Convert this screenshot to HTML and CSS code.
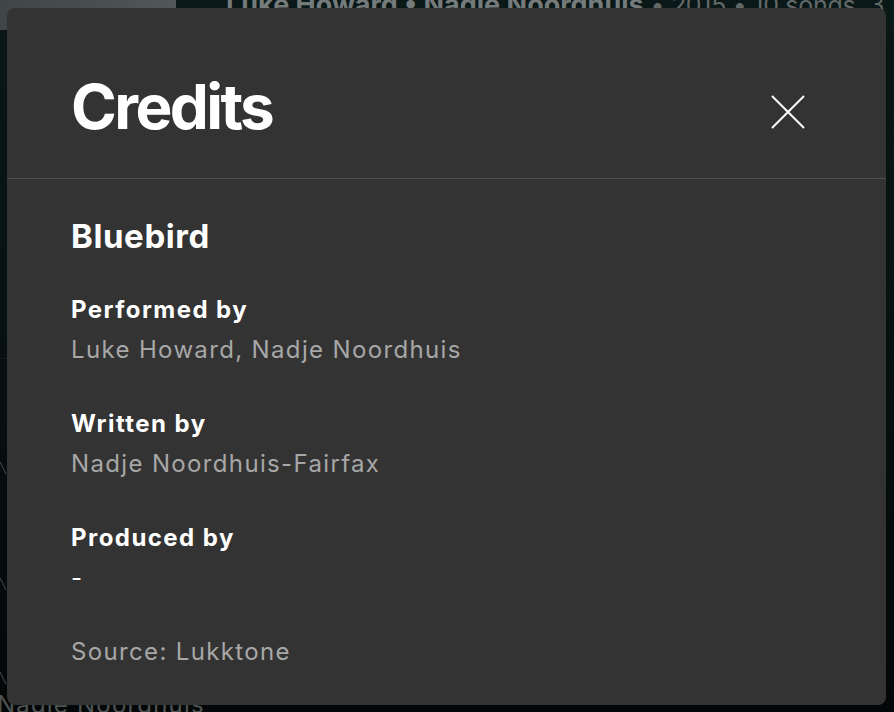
FILE: index.html
```html
<!DOCTYPE html>
<html lang="en">
<head>
<meta charset="utf-8">
<title>Credits</title>
<link rel="stylesheet" href="styles.css">
</head>
<body>
<div class="page">
  <div class="bg-top">
    <div class="art"></div>
    <div class="meta"><span class="meta-strong">Luke Howard • Nadje Noordhuis</span><span class="meta-light"> • 2015 • 10 songs, 3</span></div>
  </div>
  <div class="bg-body">
    <div class="bg-left">
      <div class="rule"></div>
      <svg class="slash s1" width="8" height="14" viewBox="0 0 8 14"><path d="M0 1 L6 13" stroke="#3a3f40" stroke-width="1.2" fill="none"/></svg>
      <svg class="slash s2" width="8" height="14" viewBox="0 0 8 14"><path d="M0 1 L6 13" stroke="#3a3f40" stroke-width="1.2" fill="none"/></svg>
      <svg class="slash s3" width="8" height="14" viewBox="0 0 8 14"><path d="M0 1 L6 13" stroke="#3a3f40" stroke-width="1.2" fill="none"/></svg>
    </div>
    <div class="bg-bottom-text">Nadje Noordhuis</div>
  </div>

  <div class="modal" role="dialog" aria-label="Credits">
    <div class="modal-header">
      <h1 class="modal-title">Credits</h1>
      <button class="close" aria-label="Close">
        <svg width="34" height="34" viewBox="0 0 34 34"><path d="M1 1 L33 33 M33 1 L1 33" stroke="#ffffff" stroke-width="2" fill="none"/></svg>
      </button>
    </div>
    <div class="modal-body">
      <h2 class="track">Bluebird</h2>
      <div class="group">
        <div class="label">Performed by</div>
        <div class="value">Luke Howard, Nadje Noordhuis</div>
      </div>
      <div class="group">
        <div class="label">Written by</div>
        <div class="value">Nadje Noordhuis-Fairfax</div>
      </div>
      <div class="group">
        <div class="label">Produced by</div>
        <div class="value dash">-</div>
      </div>
      <div class="source">Source: Lukktone</div>
    </div>
  </div>
</div>
</body>
</html>
```

FILE: styles.css
```css
html, body {
  margin: 0;
  padding: 0;
  height: 100%;
}

body {
  background: #050909;
  font-family: Inter, "Noto Sans", sans-serif;
  overflow: hidden;
}

.page {
  position: relative;
  width: 894px;
  height: 712px;
  background: linear-gradient(180deg, #0a1616 0%, #081212 40%, #040707 100%);
  overflow: hidden;
}

.bg-top {
  display: flex;
  align-items: flex-start;
  height: 30px;
  background: #0a1818;
}

.art {
  width: 176px;
  height: 30px;
  background: linear-gradient(100deg, #3f4646 0%, #4a5050 60%, #535958 100%);
  flex: none;
}

.meta {
  margin-left: 50px;
  margin-top: -11px;
  font-size: 27px;
  line-height: 32px;
  color: #626868;
  white-space: nowrap;
}

.meta-strong {
  font-weight: 700;
  color: #757b7b;
}

.meta-light {
  font-size: 25px;
  letter-spacing: -0.3px;
}

.bg-body {
  display: flex;
  flex-direction: column;
  height: 682px;
}

.bg-left {
  display: flex;
  flex-direction: column;
  width: 10px;
}

.rule {
  margin-top: 328px;
  width: 10px;
  height: 1px;
  background: #151c1c;
}

.slash {
  display: block;
}

.s1 { margin-top: 102px; }
.s2 { margin-top: 102px; }
.s3 { margin-top: 80px; }

.bg-bottom-text {
  margin-top: auto;
  margin-left: -3px;
  font-size: 24px;
  line-height: 26px;
  margin-bottom: -6px;
  color: #4f5454;
  letter-spacing: 1.2px;
  white-space: nowrap;
}

.modal {
  position: absolute;
  left: 7px;
  top: 8px;
  width: 879px;
  height: 697px;
  background: #333333;
  border-radius: 8px;
  box-sizing: border-box;
}

.modal-header {
  display: flex;
  justify-content: space-between;
  align-items: flex-start;
  padding: 59px 81px 0 64px;
  height: 171px;
  box-sizing: border-box;
  border-bottom: 1px solid #4f4f4f;
}

.modal-title {
  margin: 0;
  font-size: 62px;
  line-height: 80px;
  font-weight: 700;
  color: #ffffff;
  letter-spacing: -2.6px;
}

.close {
  margin-top: 28px;
  padding: 0;
  border: 0;
  background: transparent;
  width: 34px;
  height: 34px;
  display: block;
}

.close svg {
  display: block;
}

.modal-body {
  padding: 37px 64px 0 64px;
  display: flex;
  flex-direction: column;
  gap: 34px;
}

.track {
  margin: 0;
  font-size: 33px;
  line-height: 40px;
  font-weight: 700;
  color: #ffffff;
  letter-spacing: 0.6px;
}

.label {
  font-size: 24px;
  line-height: 40px;
  font-weight: 700;
  color: #ffffff;
  letter-spacing: 1.45px;
}

.value {
  font-size: 24px;
  line-height: 40px;
  font-weight: 400;
  color: #a7a7a7;
  letter-spacing: 1.35px;
}

.value.dash {
  color: #ffffff;
}

.source {
  font-size: 24px;
  line-height: 40px;
  color: #a7a7a7;
  letter-spacing: 1.35px;
}
```
